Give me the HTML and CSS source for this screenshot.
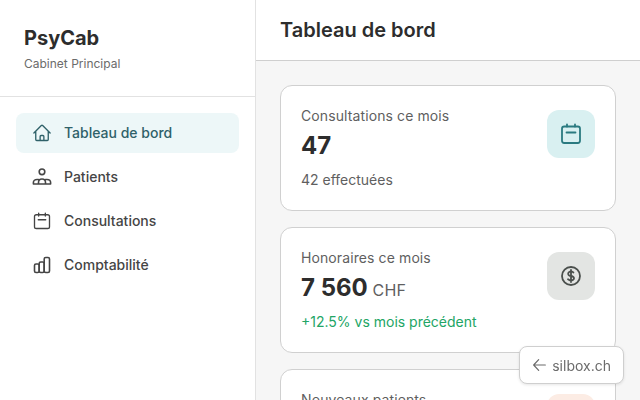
FILE: index.html
```html
<!DOCTYPE html>
<html lang="fr">
<head>
<meta charset="utf-8">
<title>PsyCab</title>
<link rel="stylesheet" href="styles.css">
</head>
<body>
<div class="app">
  <aside class="sidebar">
    <div class="brand">
      <div class="brand-name">PsyCab</div>
      <div class="brand-sub">Cabinet Principal</div>
    </div>
    <nav class="nav">
      <a class="nav-item active">
        <svg class="icon" viewBox="0 0 24 24"><path d="m2.250 12 8.954-8.955c.44-.439 1.152-.439 1.591 0L21.750 12M4.500 9.750v10.125c0 .621.504 1.125 1.125 1.125H9.750v-4.875c0-.621.504-1.125 1.125-1.125h2.250c.621 0 1.125.504 1.125 1.125V21h4.125c.621 0 1.125-.504 1.125-1.125V9.750M8.250 21h8.250"/></svg>
        <span>Tableau de bord</span>
      </a>
      <a class="nav-item">
        <svg class="icon" viewBox="0 0 20 20"><circle cx="10" cy="4.800" r="2.800"/><path d="M6.500 17v-1.500c0-2 1.500-3.500 3.500-3.500s3.500 1.500 3.500 3.500V17M6.500 12.500H5c-2 0-3.600 1.200-3.600 3V17h17.200v-1.500c0-1.800-1.600-3-3.600-3h-1.500"/></svg>
        <span>Patients</span>
      </a>
      <a class="nav-item">
        <svg class="icon" viewBox="0 0 24 24"><rect x="3" y="4.500" width="18" height="16.500" rx="2.200"/><path d="M8 2.500v3.500M16 2.500v3.500M7.500 10.500h9"/></svg>
        <span>Consultations</span>
      </a>
      <a class="nav-item">
        <svg class="icon" viewBox="0 0 20 20"><rect x="2.500" y="9" width="4.700" height="8.500" rx="1.500"/><rect x="7.200" y="7" width="5" height="10.500" rx="1.500"/><rect x="12.200" y="2.500" width="5.300" height="15" rx="1.500"/></svg>
        <span>Comptabilité</span>
      </a>
    </nav>
  </aside>
  <div class="content">
    <header class="topbar"><h1 class="page-title">Tableau de bord</h1></header>
    <main class="cards">
      <section class="card">
        <div class="card-body">
          <div class="card-label">Consultations ce mois</div>
          <div class="card-value">47</div>
          <div class="card-note">42 effectuées</div>
        </div>
        <div class="card-icon teal">
          <svg class="icon icon-lg" viewBox="0 0 24 24"><rect x="3" y="4.500" width="18" height="16.500" rx="2.200"/><path d="M8 2.500v2M16 2.500v2M7.500 10.500h9"/></svg>
        </div>
      </section>
      <section class="card">
        <div class="card-body">
          <div class="card-label">Honoraires ce mois</div>
          <div class="card-value">7 560 <span class="card-unit">CHF</span></div>
          <div class="card-note positive">+12.5% vs mois précédent</div>
        </div>
        <div class="card-icon grey">
          <svg class="icon icon-lg" viewBox="0 0 24 24"><path d="M12 6v12m-3-2.818.879.659c1.171.879 3.070.879 4.242 0 1.172-.879 1.172-2.303 0-3.182C13.536 12.219 12.768 12 12 12c-.725 0-1.450-.220-2.003-.659-1.106-.879-1.106-2.303 0-3.182s2.900-.879 4.006 0l.415.330M21 12a9 9 0 1 1-18 0 9 9 0 0 1 18 0Z"/></svg>
        </div>
      </section>
      <section class="card">
        <div class="card-body">
          <div class="card-label">Nouveaux patients</div>
          <div class="card-value">5</div>
        </div>
        <div class="card-icon peach"></div>
      </section>
    </main>
  </div>
</div>
<a class="back-link">
  <svg class="back-arrow" viewBox="0 0 24 24"><path d="M10 20 2.500 12l7.500-8M2.500 12H20"/></svg>
  <span>silbox.ch</span>
</a>
</body>
</html>
```

FILE: styles.css
```css
* { box-sizing: border-box; }
html, body { margin: 0; height: 100%; overflow: hidden; }
body { font-family: Inter, "Liberation Sans", sans-serif; color: #2d2d2d; background: #f6f6f6; }
.app { display: flex; height: 400px; }
.sidebar { width: 256px; flex: none; background: #fff; border-right: 1px solid #e2e2e2; }
.brand { height: 97px; padding: 24px 24px 0; border-bottom: 1px solid #e2e2e2; }
.brand-name { font-size: 20px; line-height: 28px; font-weight: 700; }
.brand-sub { margin-top: 4px; font-size: 12px; line-height: 16px; color: #6b6b6b; }
.nav { display: flex; flex-direction: column; gap: 4px; padding: 16px; }
.nav-item { display: flex; align-items: center; gap: 12px; height: 40px; padding: 0 16px; border-radius: 8px; font-size: 14px; line-height: 20px; font-weight: 500; color: #454545; }
.nav-item span { margin-top: -1px; }
.nav-item.active { background: #edf7f8; color: #2f6169; }
.icon { width: 20px; height: 20px; flex: none; fill: none; stroke: currentColor; stroke-width: 1.600; stroke-linecap: round; stroke-linejoin: round; }
.icon-lg { width: 24px; height: 24px; stroke-width: 1.800; }
.content { flex: 1; min-width: 0; }
.topbar { height: 61px; padding: 0 24px; display: flex; align-items: center; background: #fff; border-bottom: 1px solid #cfcfcf; }
.page-title { margin: 0; font-size: 20px; line-height: 28px; font-weight: 600; }
.cards { display: flex; flex-direction: column; gap: 16px; padding: 24px; }
.card { display: flex; justify-content: space-between; align-items: flex-start; padding: 20px; background: #fff; border: 1px solid #d0d0d0; border-radius: 12px; }
.card-label { font-size: 14px; line-height: 20px; letter-spacing: .1px; color: #5f5f5f; }
.card-value { margin-top: 4px; font-size: 24px; line-height: 32px; font-weight: 700; }
.card-unit { margin-left: -1px; font-size: 16px; line-height: 1; letter-spacing: .3px; font-weight: 400; color: #5f5f5f; }
.card-note { margin-top: 8px; font-size: 14px; line-height: 20px; color: #5f5f5f; }
.card-note.positive { color: #22a565; }
.card-icon { width: 48px; height: 48px; margin-top: 4px; flex: none; display: flex; align-items: center; justify-content: center; border-radius: 12px; }
.teal { background: #d9f0f1; color: #2a7a80; }
.grey { background: #e3e5e3; color: #4a4f4c; }
.peach { background: #fcece4; }
.back-link { position: fixed; right: 16px; bottom: 16px; display: flex; align-items: center; gap: 4px; height: 38px; padding: 0 12px; background: #fff; border: 1px solid #cfcfcf; border-radius: 8px; box-shadow: 0 1px 3px rgba(0,0,0,.1); font-size: 14px; color: #6b6b6b; }
.back-arrow { width: 16px; height: 16px; fill: none; stroke: currentColor; stroke-width: 1.800; stroke-linecap: round; stroke-linejoin: round; }
```
